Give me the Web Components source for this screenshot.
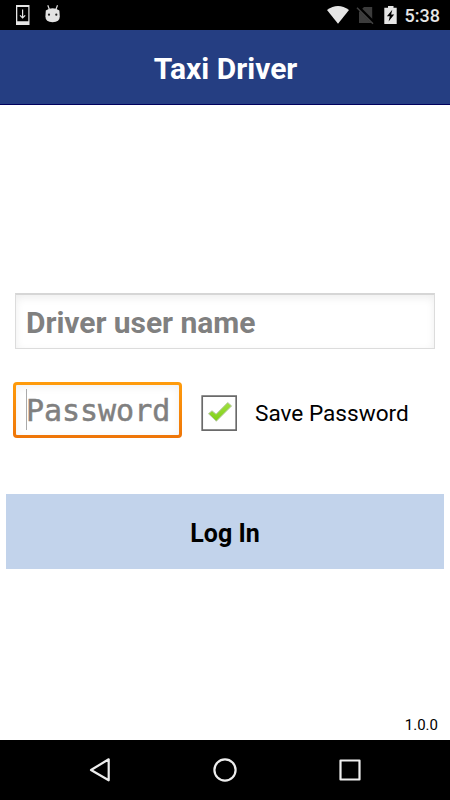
<!DOCTYPE html>
<html lang="en">
<head>
<meta charset="utf-8">
<title>Taxi Driver</title>
<style>
	html, body {
		margin: 0;
		height: 100%;
		background: #fff;
		overflow: hidden;
	}
</style>
</head>
<body>
<login-screen></login-screen>

<script>
class StatusBar extends HTMLElement {
	constructor() {
		super();
		this.attachShadow({mode: 'open'});
		this.shadowRoot.innerHTML = `
			<style>
				:host {
					display: flex;
					justify-content: space-between;
					height: 30px;
					background: #000;
					color: #e6e6e6;
				}

				svg {
					display: block;
				}

				.time {
					display: flex;
					align-items: center;
					padding: 2px 10px 0 0;
					font-size: 18px;
					font-weight: 500;
					line-height: 28px;
				}

				.group {
					display: flex;
					gap: 5px;
				}
			</style>
			<svg width="80" height="30" viewBox="0 0 80 30">
				<path fill="#e6e6e6" fill-rule="evenodd" d="M16 5h13.5v20H16zM17.3 7v14.2h11V7z"/>
				<path fill="none" stroke="#e6e6e6" stroke-width="1.2" d="M22.6 9.5v8M20 15.3l2.6 2.7 2.6-2.7"/>
				<path fill="none" stroke="#ddd" stroke-width="1.2" d="M47.8 5.2l1.6 4.3M57.5 5.2l-1.6 4.3"/>
				<path fill="#e2e2e2" d="M45.800 10.500q6.800-4.500 13.600 0l.4 6q0 5.700-7.200 5.700t-7.200-5.700z"/>
				<circle cx="49" cy="14.700" r="1.100" fill="#222"/>
				<circle cx="56.300" cy="14.700" r="1.100" fill="#222"/>
			</svg>
			<div class="group">
				<svg width="80" height="30" viewBox="320 0 80 30">
					<path fill="#e6e6e6" d="M327 10q11-8 22 0l-11 13.700z"/>
					<path fill="#3c3c3c" d="M364 7h8.200v16H359V12z"/>
					<path stroke="#000" stroke-width="3.500" d="M357.500 6.500l16 16"/>
					<path stroke="#444" stroke-width="1.500" d="M357 7.800l16 16"/>
					<path fill="#e6e6e6" d="M388 6h5.500v1.800h3.200V24h-12.400V7.800h3.700z"/>
					<path fill="#000" d="M392.300 9.800l-5.400 6.500h2.900l-1.200 5.300 5.600-7h-3.100z"/>
				</svg>
				<span class="time"><slot></slot></span>
			</div>
		`;
	}
}

class TitleBar extends HTMLElement {
	constructor() {
		super();
		this.attachShadow({mode: 'open'});
		this.shadowRoot.innerHTML = `
			<style>
				:host {
					display: flex;
					align-items: center;
					justify-content: center;
					box-sizing: border-box;
					height: 75px;
					padding: 3px 0 0 1px;
					background: #253e82;
					border-bottom: 1px solid #00005c;
					color: #fff;
					font-size: 30px;
					font-weight: 700;
				}
			</style>
			<slot></slot>
		`;
	}
}

class TextField extends HTMLElement {
	constructor() {
		super();
		this.attachShadow({mode: 'open'});
		this.shadowRoot.innerHTML = `
			<style>
				:host {
					display: flex;
					align-items: center;
					box-sizing: border-box;
					height: 56px;
					padding: 1px 10px 0;
					background: #fff;
					border: 1px solid #dcdcdc;
					border-top: 2px solid #d6d6d6;
					box-shadow: inset 0 3px 9px #00000012;
					color: #808080;
					font-size: 30px;
					font-weight: 700;
					letter-spacing: -.04px;
					white-space: nowrap;
				}

				:host([focused]) {
					padding: 1px 0 0 10px;
					border: 3px solid transparent;
					border-radius: 4px;
					background:
						linear-gradient(#fff, #fff) padding-box,
						linear-gradient(#ff9c0c, #ee7508) border-box;
					box-shadow: inset 0 2px 8px #00000010;
					font-family: "DejaVu Sans Mono", monospace;
					font-weight: 400;
					-webkit-text-stroke: .5px #808080;
				}

				.caret {
					display: none;
					flex: none;
					width: 1px;
					height: 41px;
					margin: 0 -1px 2px 0;
					background: #aaa;
				}

				:host([focused]) .caret {
					display: block;
				}
			</style>
			<span class="caret"></span>
			<slot></slot>
		`;
	}
}

class CheckOption extends HTMLElement {
	constructor() {
		super();
		this.attachShadow({mode: 'open'});
		this.shadowRoot.innerHTML = `
			<style>
				:host {
					display: flex;
					align-items: center;
					gap: 18px;
					font-size: 22.6px;
					white-space: nowrap;
				}

				svg {
					display: block;
				}
			</style>
			<svg width="36" height="36" viewBox="0 0 36 36">
				<defs>
					<linearGradient id="green" x2="0" y2="1">
						<stop offset="0" stop-color="#a0e040"/>
						<stop offset="1" stop-color="#7fcf16"/>
					</linearGradient>
				</defs>
				<path fill="#fff" stroke="#6a6a6a" stroke-width="1.700" d="M1.200 1.200h34v34h-34z"/>
				<path fill="url(#green)" stroke="#b9c8a6" stroke-width="1" stroke-linejoin="round" d="M7.500 18.700l3.500-2.900 4.100 3.400L26.700 7.600l3.900 3.300L15.300 26.200z"/>
			</svg>
			<slot></slot>
		`;
	}
}

class LoginButton extends HTMLElement {
	constructor() {
		super();
		this.attachShadow({mode: 'open'});
		this.shadowRoot.innerHTML = `
			<style>
				:host {
					display: block;
				}

				button {
					display: block;
					width: 100%;
					height: 75px;
					padding: 3px 0 0;
					border: 0;
					background: #c2d3eb;
					color: #000;
					font: 700 25px Roboto, sans-serif;
				}
			</style>
			<button type="button"><slot></slot></button>
		`;
	}
}

class NavBar extends HTMLElement {
	constructor() {
		super();
		this.attachShadow({mode: 'open'});
		this.shadowRoot.innerHTML = `
			<style>
				:host {
					display: flex;
					align-items: center;
					justify-content: center;
					gap: 95px;
					height: 60px;
					background: #000;
				}

				svg {
					fill: none;
					stroke: #eee;
					stroke-width: 2.2;
					stroke-linejoin: round;
				}
			</style>
			<svg width="30" height="30" viewBox="85 755 30 30"><path d="M108.700 759.300v21L91 770z"/></svg>
			<svg width="30" height="30" viewBox="210 755 30 30"><circle cx="225" cy="770" r="10.600"/></svg>
			<svg width="30" height="30" viewBox="335 755 30 30"><path d="M340.500 760.500h19v19h-19z"/></svg>
		`;
	}
}

class LoginScreen extends HTMLElement {
	constructor() {
		super();
		this.attachShadow({mode: 'open'});
		this.shadowRoot.innerHTML = `
			<style>
				:host {
					display: flex;
					flex-direction: column;
					width: 450px;
					height: 800px;
					background: #fff;
					color: #000;
					font-family: Roboto, sans-serif;
				}

				main {
					flex: 1;
					display: flex;
					flex-direction: column;
					padding-top: 188px;
				}

				.user {
					margin: 0 15px;
				}

				.row {
					display: flex;
					align-items: center;
					gap: 19px;
					margin: 33px 13px 0;
				}

				.password {
					width: 169px;
				}

				check-option {
					padding-top: 6px;
				}

				login-button {
					margin: 56px 6px 0;
				}

				.version {
					margin: auto 12px 6px auto;
					font-size: 15px;
				}
			</style>
			<status-bar>5:38</status-bar>
			<title-bar>Taxi Driver</title-bar>
			<main>
				<text-field class="user">Driver user name</text-field>
				<div class="row">
					<text-field class="password" focused>Password</text-field>
					<check-option>Save Password</check-option>
				</div>
				<login-button>Log In</login-button>
				<span class="version">1.0.0</span>
			</main>
			<nav-bar></nav-bar>
		`;
	}
}

customElements.define('status-bar', StatusBar);
customElements.define('title-bar', TitleBar);
customElements.define('text-field', TextField);
customElements.define('check-option', CheckOption);
customElements.define('login-button', LoginButton);
customElements.define('nav-bar', NavBar);
customElements.define('login-screen', LoginScreen);
</script>
</body>
</html>
